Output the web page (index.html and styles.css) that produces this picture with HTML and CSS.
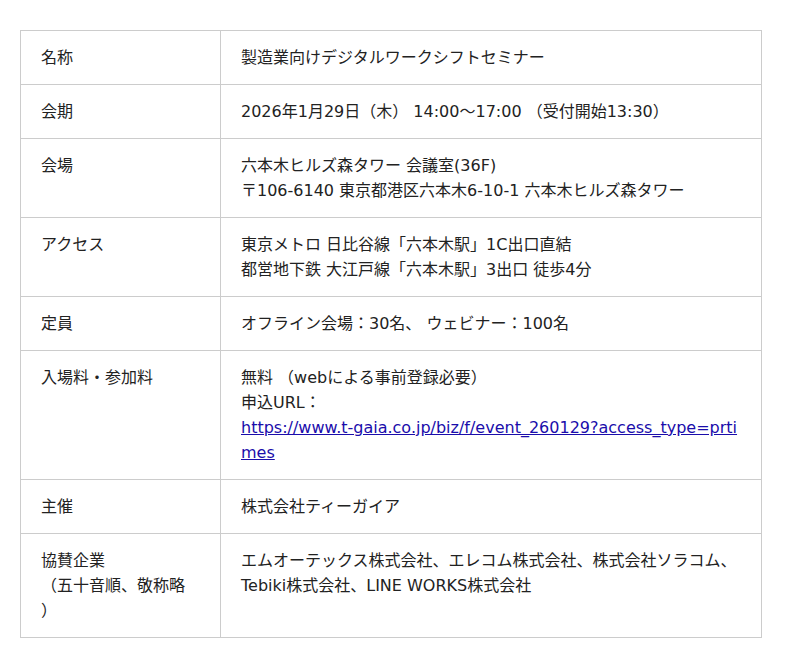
FILE: index.html
```html
<!DOCTYPE html>
<html lang="ja">
<head>
<meta charset="utf-8">
<link rel="stylesheet" href="styles.css">
</head>
<body>
<div class="wrap">
<table class="info">
<tr><th>名称</th><td>製造業向けデジタルワークシフトセミナー</td></tr>
<tr><th>会期</th><td>2026年1月29日（木） 14:00〜17:00 （受付開始13:30）</td></tr>
<tr><th>会場</th><td>六本木ヒルズ森タワー 会議室(36F)<br>〒106-6140 東京都港区六本木6-10-1 六本木ヒルズ森タワー</td></tr>
<tr><th>アクセス</th><td>東京メトロ 日比谷線「六本木駅」1C出口直結<br>都営地下鉄 大江戸線「六本木駅」3出口 徒歩4分</td></tr>
<tr><th>定員</th><td>オフライン会場：30名、 ウェビナー：100名</td></tr>
<tr><th>入場料・参加料</th><td>無料 （webによる事前登録必要）<br>申込URL：<br><a href="#">https://www.t-gaia.co.jp/biz/f/event_260129?access_type=prtimes</a></td></tr>
<tr><th>主催</th><td>株式会社ティーガイア</td></tr>
<tr><th>協賛企業<br>（五十音順、敬称略）</th><td>エムオーテックス株式会社、エレコム株式会社、株式会社ソラコム、Tebiki株式会社、LINE WORKS株式会社</td></tr>
</table>
</div>
</body>
</html>
```
FILE: styles.css
```css
html, body {
  margin: 0;
  padding: 0;
  background: #fff;
}
.wrap {
  padding: 30px 38px 30px 20px;
}
.info {
  width: 742px;
  border-collapse: collapse;
  font-family: "DejaVu Sans", "Noto Sans CJK JP", sans-serif;
  font-size: 16px;
  line-height: 25px;
  color: #222;
  text-spacing-trim: space-all;
}
.info th,
.info td {
  border: 1px solid #ccc;
  padding: 14px 20px;
  text-align: left;
  vertical-align: top;
  font-weight: normal;
}
.info th {
  width: 159px;
  line-break: anywhere;
}
.info td {
  overflow-wrap: anywhere;
  word-break: break-all;
}
.info a {
  color: #1a0dab;
}
```
